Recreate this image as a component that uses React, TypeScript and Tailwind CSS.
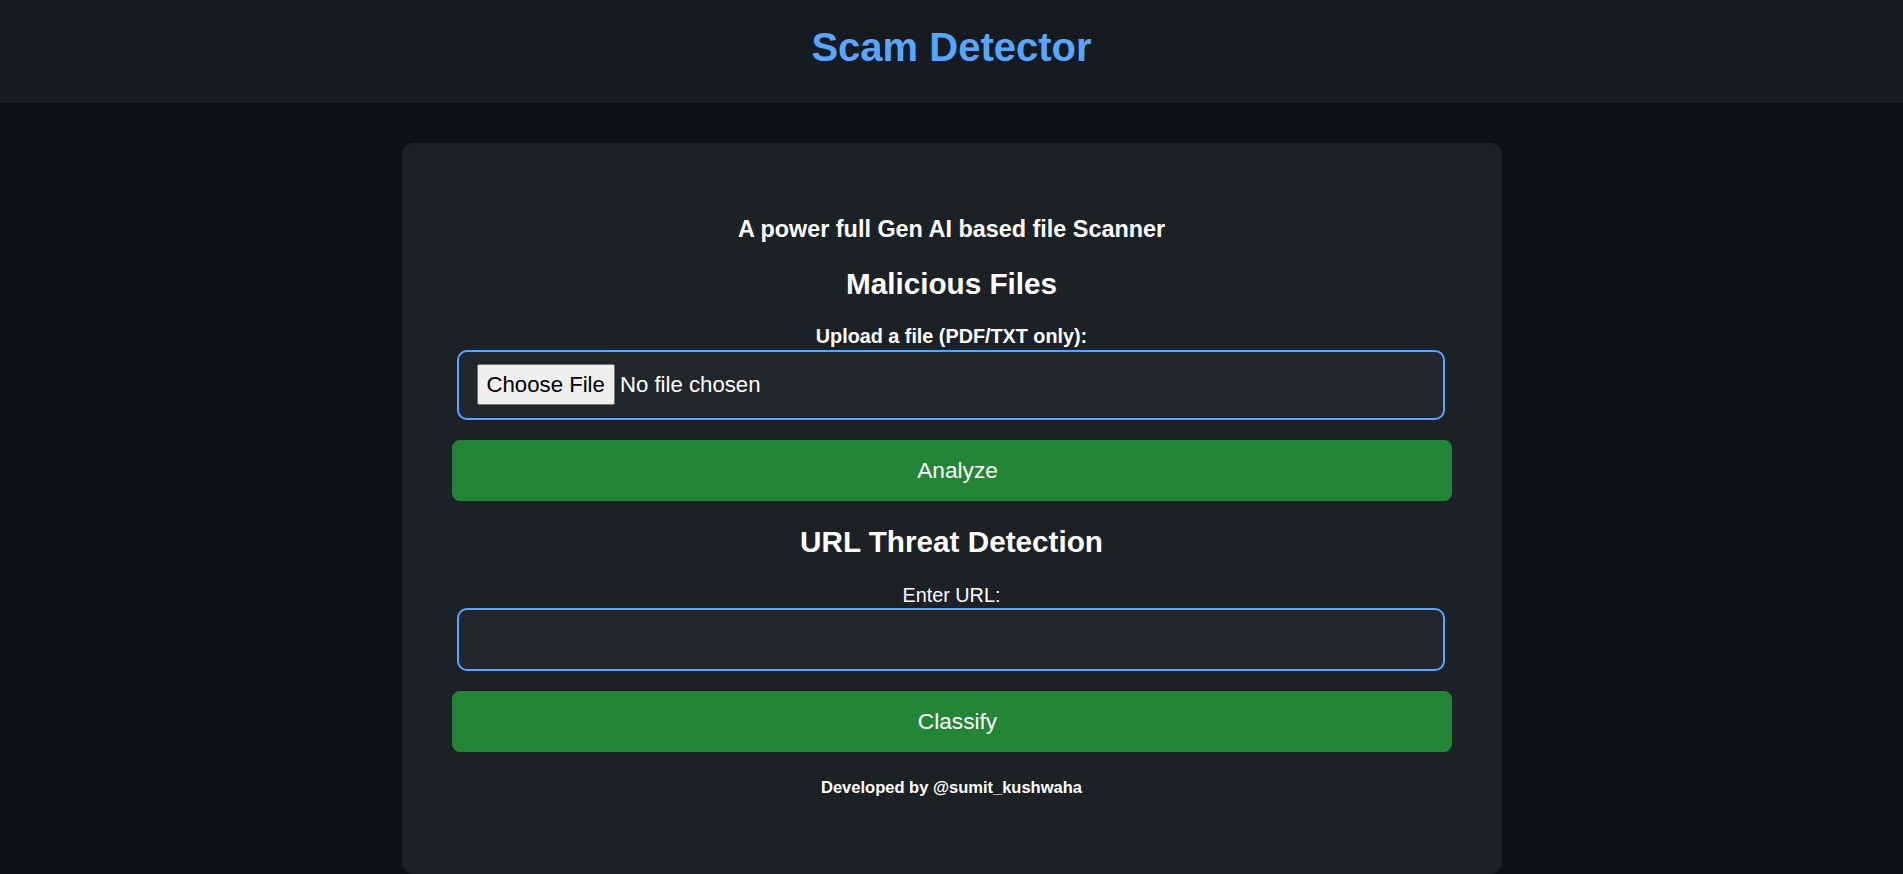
import { useState } from "react";

export default function App() {
  const [url, setUrl] = useState("");

  return (
    <div className="min-h-screen bg-[#0d1117] font-['Liberation_Sans',Arial,sans-serif] text-white">
      <header className="bg-[#161b22] pt-[25px] pb-[32px] text-center">
        <h1 className="text-[40px] font-bold leading-[45.5px] text-[#58a6ff]">Scam Detector</h1>
      </header>

      <main className="mx-auto mt-[40px] w-[1100px] rounded-[12px] bg-[#1c2128] px-[50px] pt-[73px] pb-[77px] text-center">
        <h3 className="text-[23.4px] font-bold leading-[27px]">A power full Gen AI based file Scanner</h3>

        <h2 className="mt-[24px] text-[29.7px] font-bold leading-[34px]">Malicious Files</h2>
        <label className="mt-[24px] block text-[19.8px] font-bold leading-[23px]">Upload a file (PDF/TXT only):</label>
        <div className="mt-[2px] ml-[5px] flex h-[70px] w-[988px] items-center rounded-[10px] border-2 border-[#58a6ff] bg-[#21262d] px-[18px]">
          <input
            type="file"
            accept=".pdf,.txt"
            className="text-[22.2px] text-white file:mr-[5px] file:rounded-[2px] file:border file:border-[#767676] file:bg-[#efefef] file:px-[9px] file:py-[2.5px] file:text-black"
          />
        </div>
        <button className="mt-[20px] h-[61px] w-full rounded-[8px] bg-[#238636] pl-[12px] text-[22.7px] text-white">Analyze</button>

        <h2 className="mt-[24px] text-[29.7px] font-bold leading-[34px]">URL Threat Detection</h2>
        <label className="mt-[25px] block text-[19.8px] leading-[23px]">Enter URL:</label>
        <input
          type="text"
          value={url}
          onChange={(e) => setUrl(e.target.value)}
          className="mt-[1px] ml-[5px] block h-[63px] w-[988px] rounded-[10px] border-2 border-[#58a6ff] bg-[#21262d] px-[18px] text-[22.2px] text-white outline-none"
        />
        <button className="mt-[20px] h-[61px] w-full rounded-[8px] bg-[#238636] pl-[12px] text-[22.7px] text-white">Classify</button>

        <p className="mt-[26px] text-[16.5px] font-bold leading-[19px]">Developed by @sumit_kushwaha</p>
      </main>
    </div>
  );
}
